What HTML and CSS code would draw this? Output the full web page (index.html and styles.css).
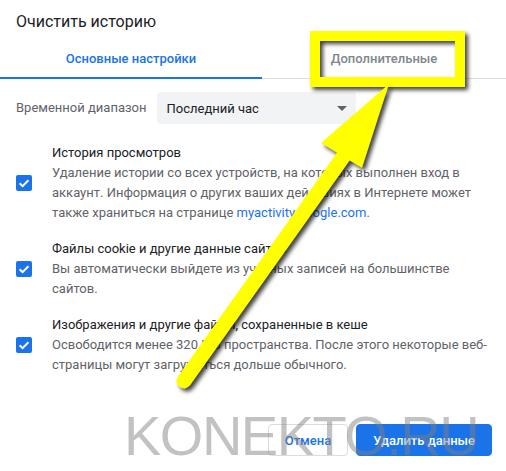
FILE: index.html
```html
<!DOCTYPE html>
<html lang="ru">
<head>
<meta charset="utf-8">
<title>Очистить историю</title>
<link rel="stylesheet" href="styles.css">
</head>
<body>
<div class="dialog">
  <h1 class="title">Очистить историю</h1>
  <div class="tabs">
    <div class="tab tab-active">Основные настройки</div>
    <div class="tab">Дополнительные</div>
  </div>
  <div class="range">
    <span class="range-label">Временной диапазон</span>
    <div class="select">
      <span>Последний час</span>
      <span class="caret"></span>
    </div>
  </div>
  <div class="items">
    <div class="item">
      <span class="checkbox"><svg viewBox="0 0 16 16" width="16" height="16"><path d="M3.6 8.2 L6.6 11.1 L12.4 5.2" fill="none" stroke="#fff" stroke-width="2"/></svg></span>
      <div class="item-text">
        <div class="item-title">История просмотров</div>
        <div class="item-desc">Удаление истории со всех устройств, на которых выполнен вход в аккаунт. Информация о других ваших действиях в Интернете может также храниться на странице <span class="link">myactivity.google.com</span>.</div>
      </div>
    </div>
    <div class="item">
      <span class="checkbox"><svg viewBox="0 0 16 16" width="16" height="16"><path d="M3.6 8.2 L6.6 11.1 L12.4 5.2" fill="none" stroke="#fff" stroke-width="2"/></svg></span>
      <div class="item-text">
        <div class="item-title">Файлы cookie и другие данные сайтов</div>
        <div class="item-desc">Вы автоматически выйдете из учетных записей на большинстве сайтов.</div>
      </div>
    </div>
    <div class="item">
      <span class="checkbox"><svg viewBox="0 0 16 16" width="16" height="16"><path d="M3.6 8.2 L6.6 11.1 L12.4 5.2" fill="none" stroke="#fff" stroke-width="2"/></svg></span>
      <div class="item-text">
        <div class="item-title">Изображения и другие файлы, сохраненные в кеше</div>
        <div class="item-desc">Освободится менее 320 МБ пространства. После этого некоторые веб-страницы могут загружаться дольше обычного.</div>
      </div>
    </div>
  </div>
  <div class="buttons">
    <button class="btn btn-cancel">Отмена</button>
    <button class="btn btn-primary">Удалить данные</button>
  </div>
</div>

<div class="highlight"></div>
<svg class="arrow" viewBox="0 0 506 471" width="506" height="471">
  <g class="arrow-shape">
    <line x1="184" y1="381" x2="348" y2="150" stroke="#ffff00" stroke-width="15" stroke-linecap="round"/>
    <polygon points="389,84 321,143 362,168" fill="#ffff00"/>
  </g>
</svg>
<div class="watermark">KONEKTO.RU</div>
</body>
</html>
```

FILE: styles.css
```css
* {
  box-sizing: border-box;
}

html, body {
  margin: 0;
  padding: 0;
  background: #fff;
}

body {
  width: 506px;
  height: 471px;
  overflow: hidden;
  position: relative;
  font-family: Roboto, "Liberation Sans", sans-serif;
  font-size: 13px;
  color: #202124;
}

.dialog {
  padding: 12px 14px 0 0;
}

.title {
  margin: 0 0 0 16px;
  font-size: 16px;
  line-height: 20px;
  font-weight: 400;
  color: #202124;
}

.tabs {
  margin-top: 8px;
  margin-right: -14px;
  display: grid;
  grid-template-columns: 262px 1fr;
  border-bottom: 1px solid #dadce0;
}

.tab {
  height: 39px;
  margin-bottom: -1px;
  display: flex;
  align-items: center;
  justify-content: center;
  border-bottom: 2px solid transparent;
  font-weight: 500;
  font-size: 13px;
  color: #80868b;
}

.tab-active {
  color: #1a73e8;
  border-bottom-color: #1a73e8;
}

.range {
  margin: 13px 0 0 16px;
  display: flex;
  align-items: center;
  gap: 11px;
}

.range-label {
  color: #5f6368;
  line-height: 20px;
}

.select {
  width: 199px;
  height: 32px;
  background: #f1f3f4;
  border-radius: 4px;
  display: flex;
  align-items: center;
  justify-content: space-between;
  padding: 0 9px 0 9px;
  color: #202124;
}

.caret {
  width: 0;
  height: 0;
  border-left: 5px solid transparent;
  border-right: 5px solid transparent;
  border-top: 5px solid #5f6368;
}

.items {
  margin: 19px 0 0 16px;
  display: flex;
  flex-direction: column;
  gap: 16px;
}

.item {
  display: flex;
  align-items: center;
  gap: 20px;
}

.checkbox {
  flex: none;
  width: 16px;
  height: 16px;
  border-radius: 2px;
  background: #1a73e8;
  display: block;
}

.checkbox svg {
  display: block;
}

.item-text {
  flex: 1;
  line-height: 20px;
}

.item-title {
  color: #202124;
}

.item-desc {
  color: #5f6368;
}

.link {
  color: #1a73e8;
}

.buttons {
  margin-top: 49px;
  display: flex;
  justify-content: flex-end;
  gap: 8px;
}

.btn {
  height: 32px;
  border-radius: 4px;
  font-family: Roboto, "Liberation Sans", sans-serif;
  font-size: 13px;
  font-weight: 500;
  padding: 0 16px;
  cursor: pointer;
}

.btn-cancel {
  background: #fff;
  border: 1px solid #dadce0;
  color: #1a73e8;
}

.btn-primary {
  background: #1a73e8;
  border: 1px solid #1a73e8;
  color: #fff;
  padding: 0 16px;
}

.highlight {
  position: absolute;
  left: 310px;
  top: 31px;
  width: 155px;
  height: 56px;
  border: 10px solid #ffff00;
  filter: drop-shadow(3px 3px 2px rgba(0, 0, 0, 0.75));
}

.arrow {
  position: absolute;
  left: 0;
  top: 0;
  pointer-events: none;
}

.arrow-shape {
  filter: drop-shadow(3px 3px 2px rgba(0, 0, 0, 0.75));
}

.watermark {
  position: absolute;
  left: 124px;
  top: 408px;
  font-family: "Liberation Sans", Arial, sans-serif;
  font-size: 56px;
  line-height: 56px;
  letter-spacing: -1.5px;
  color: rgba(128, 128, 128, 0.48);
  white-space: nowrap;
  pointer-events: none;
}
```
